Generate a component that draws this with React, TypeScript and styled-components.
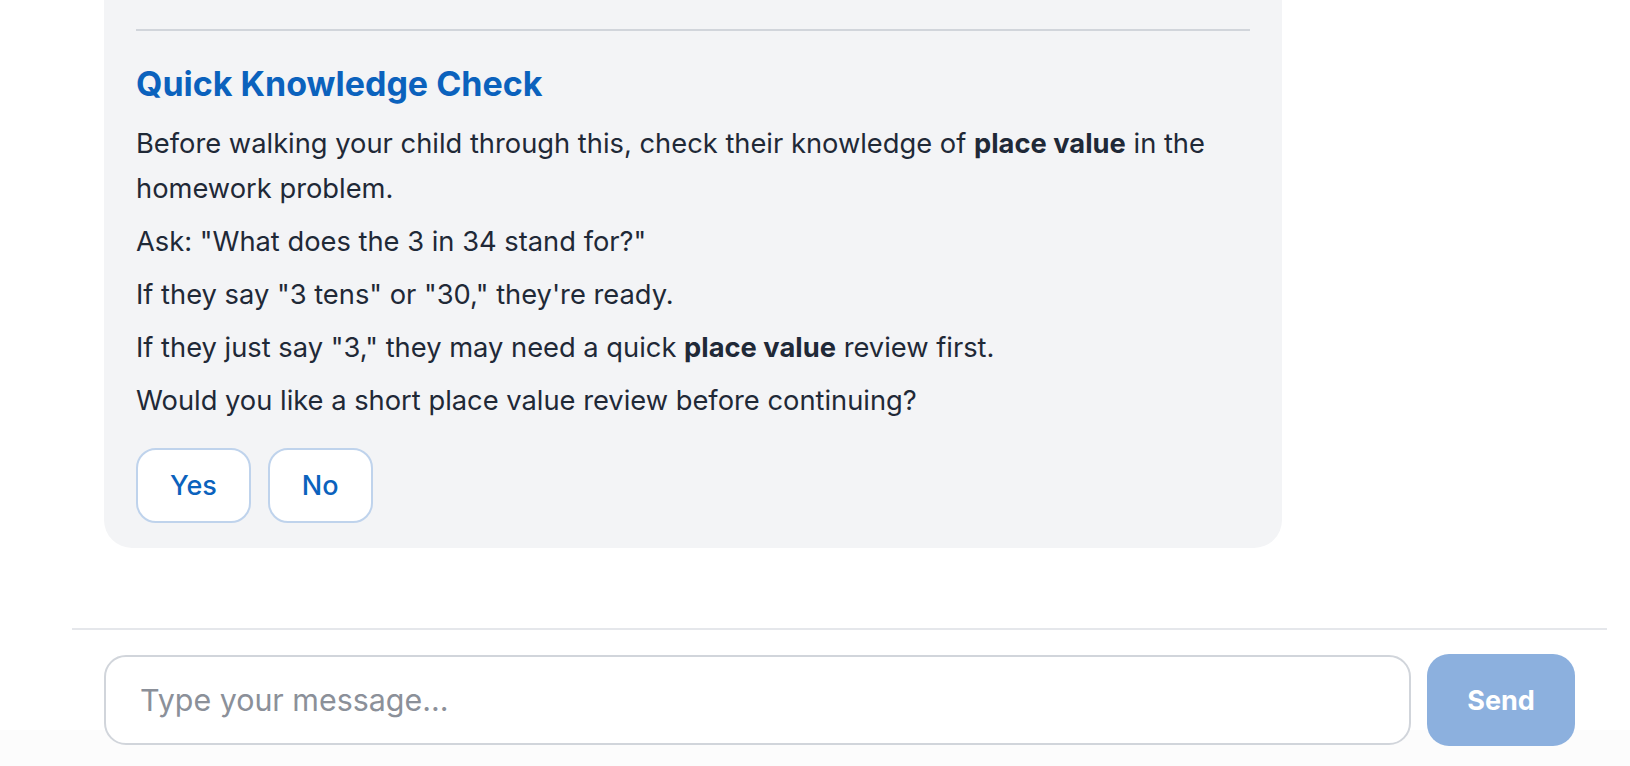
import * as React from "react";
import styled, { createGlobalStyle } from "styled-components";

const GlobalStyle = createGlobalStyle`
  html, body {
    margin: 0;
    padding: 0;
    background: linear-gradient(to bottom, #ffffff 730px, #fcfcfc 730px);
    font-family: Inter, "Noto Sans", "Liberation Sans", sans-serif;
    color: #1f2937;
  }
  * {
    box-sizing: border-box;
  }
`;

const Page = styled.div`
  height: 766px;
  margin: 0 23px 0 72px;
  display: flex;
  flex-direction: column;
`;

// the thread is scrolled to the end: older content runs off the top
const Messages = styled.div`
  height: 628px;
  overflow: hidden;
  display: flex;
  flex-direction: column;
  justify-content: flex-end;
  padding: 0 32px 80px;
`;

const Bubble = styled.div`
  flex-shrink: 0;
  width: 1178px;
  max-width: 81%;
  background: #f3f4f6;
  border-radius: 28px;
  padding: 28px 32px 25px;
`;

const Divider = styled.hr`
  margin: 80px 0 0;
  border: 0;
  border-top: 2px solid #d1d5db;
`;

const Title = styled.h2`
  margin: 33px 0 17px;
  font-size: 34px;
  line-height: 40px;
  font-weight: 700;
  color: #0b62bd;
`;

const Text = styled.p`
  margin: 0 0 8px;
  font-size: 27.3px;
  line-height: 45px;
  color: #1f2937;

  strong {
    font-weight: 700;
  }
`;

const Choices = styled.div`
  display: flex;
  gap: 17px;
  margin-top: 25px;
`;

const Choice = styled.button`
  height: 75px;
  padding: 0 32px;
  background: #ffffff;
  border: 2px solid #bfd3ec;
  border-radius: 20px;
  font-family: inherit;
  font-size: 27px;
  font-weight: 500;
  color: #0b62bd;
  cursor: pointer;
`;

const Composer = styled.div`
  border-top: 2px solid #e5e7eb;
  padding: 25px 32px 0;
  display: flex;
  gap: 16px;
`;

const Input = styled.input`
  flex: 1;
  height: 90px;
  padding: 0 34px;
  border: 2px solid #d1d5db;
  border-radius: 22px;
  background: #ffffff;
  font-family: inherit;
  font-size: 30.4px;
  color: #1f2937;
  outline: none;

  &::placeholder {
    color: #8b9099;
  }
`;

const SendButton = styled.button<{ $disabled?: boolean }>`
  width: 148px;
  height: 92px;
  margin-top: -1px;
  border: 0;
  border-radius: 22px;
  background: ${p => (p.$disabled ? "#8cb0de" : "#1d6fcf")};
  color: #ffffff;
  font-family: inherit;
  font-size: 27px;
  font-weight: 700;
  cursor: pointer;
`;

export default function App() {
  const [text, setText] = React.useState("");

  return (
    <>
      <GlobalStyle />
      <Page>
        <Messages>
          <Bubble>
            <Divider />
            <Title>Quick Knowledge Check</Title>
            <Text>
              Before walking your child through this, check their knowledge of{" "}
              <strong>place value</strong> in the homework problem.
            </Text>
            <Text>Ask: "What does the 3 in 34 stand for?"</Text>
            <Text>If they say "3 tens" or "30," they're ready.</Text>
            <Text>
              If they just say "3," they may need a quick <strong>place value</strong>{" "}
              review first.
            </Text>
            <Text>Would you like a short place value review before continuing?</Text>
            <Choices>
              <Choice>Yes</Choice>
              <Choice>No</Choice>
            </Choices>
          </Bubble>
        </Messages>
        <Composer>
          <Input
            placeholder="Type your message..."
            value={text}
            onChange={e => setText(e.target.value)}
          />
          <SendButton $disabled={!text.trim()}>Send</SendButton>
        </Composer>
      </Page>
    </>
  );
}
